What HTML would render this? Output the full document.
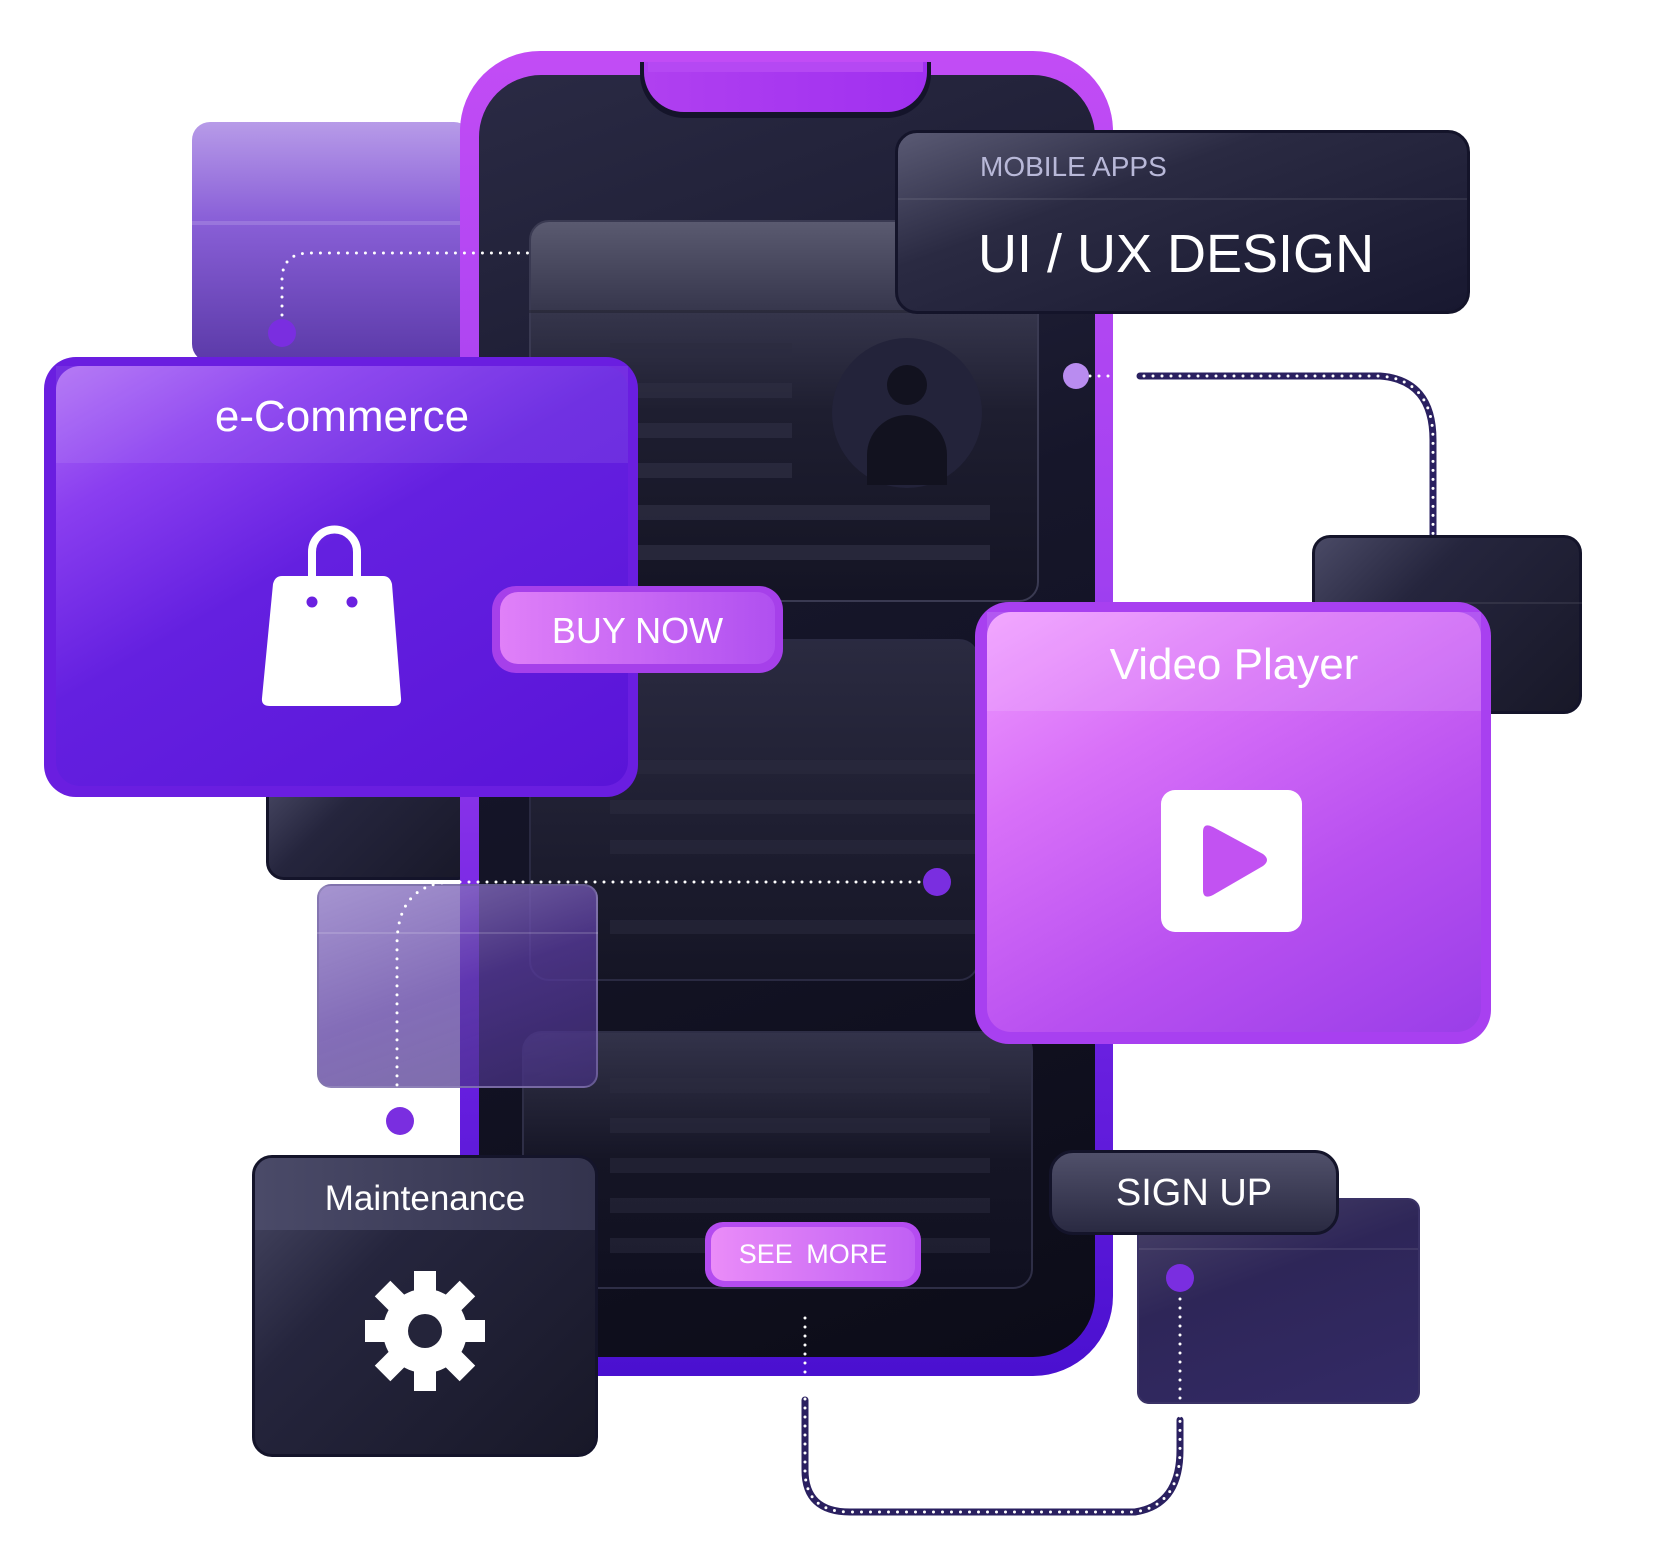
<!DOCTYPE html>
<html><head><meta charset="utf-8"><style>
*{margin:0;padding:0;box-sizing:border-box}
body{width:1662px;height:1549px;background:#fff;position:relative;overflow:hidden;font-family:"Liberation Sans",sans-serif}
.a{position:absolute}
.dark{background:linear-gradient(135deg,#4a4a66 0%,#25253d 35%,#181828 100%);border:3px solid #14142a;border-radius:18px;overflow:hidden}
.band{position:absolute;left:0;right:0;top:0}
.t{position:absolute;color:#fff;white-space:nowrap}
.line{position:absolute;background:#2c2c40;opacity:.8}
</style></head><body>

<div class="a" style="left:192px;top:122px;width:280px;height:240px;border-radius:18px;background:linear-gradient(180deg,#b79be8 0%,#8a60d8 40%,#5b3aa8 100%)"></div>
<div class="a" style="left:192px;top:221px;width:280px;height:4px;background:rgba(255,255,255,.15)"></div>
<div class="a dark" style="left:266px;top:770px;width:210px;height:110px"></div>

<div class="a" style="left:460px;top:51px;width:653px;height:1325px;border-radius:80px;background:linear-gradient(180deg,#c24cf5 0%,#a040f0 40%,#6a20e0 75%,#4a10d0 100%)"></div>
<div class="a" style="left:479px;top:75px;width:616px;height:1282px;border-radius:62px;background:linear-gradient(160deg,#2a2a44 0%,#16162a 40%,#0c0c18 100%)"></div>
<div class="a" style="left:640px;top:62px;width:291px;height:56px;border-radius:0 0 44px 44px;background:#14142a"></div>
<div class="a" style="left:644px;top:62px;width:283px;height:50px;border-radius:0 0 40px 40px;background:linear-gradient(90deg,#b040f0,#a030f0)"></div>
<div class="a" style="left:648px;top:62px;width:275px;height:10px;background:#b548f3"></div>

<div class="a" style="left:529px;top:220px;width:510px;height:382px;border-radius:20px;background:linear-gradient(180deg,#5a5a70 0%,#34344a 25%,#1e1e30 50%,#141424 100%);border:2px solid #3a3a52"></div>
<div class="a" style="left:529px;top:310px;width:510px;height:3px;background:rgba(0,0,0,.2)"></div>
<div class="a" style="left:832px;top:338px;width:150px;height:150px;border-radius:50%;background:#23233a"></div>
<div class="a" style="left:887px;top:365px;width:40px;height:40px;border-radius:50%;background:#12121f"></div>
<div class="a" style="left:867px;top:415px;width:80px;height:70px;border-radius:40px 40px 0 0;background:#12121f"></div>
<div class="line" style="left:610px;top:343px;width:182px;height:15px"></div>
<div class="line" style="left:610px;top:383px;width:182px;height:15px"></div>
<div class="line" style="left:610px;top:423px;width:182px;height:15px"></div>
<div class="line" style="left:610px;top:463px;width:182px;height:15px"></div>
<div class="line" style="left:610px;top:505px;width:380px;height:15px"></div>
<div class="line" style="left:610px;top:545px;width:380px;height:15px"></div>

<div class="a" style="left:529px;top:639px;width:450px;height:342px;border-radius:20px;background:linear-gradient(180deg,#2a2a40,#151525);border:2px solid #2a2a42"></div>
<div class="line" style="left:610px;top:760px;width:370px;height:14px;opacity:.5"></div>
<div class="line" style="left:610px;top:800px;width:370px;height:14px;opacity:.5"></div>
<div class="line" style="left:610px;top:840px;width:370px;height:14px;opacity:.5"></div>
<div class="line" style="left:610px;top:920px;width:370px;height:14px;opacity:.5"></div>

<div class="a" style="left:522px;top:1031px;width:511px;height:258px;border-radius:20px;background:linear-gradient(180deg,#33334a,#151525 50%,#101020);border:2px solid #2e2e46"></div>
<div class="line" style="left:610px;top:1078px;width:380px;height:15px;opacity:.5"></div>
<div class="line" style="left:610px;top:1118px;width:380px;height:15px;opacity:.5"></div>
<div class="line" style="left:610px;top:1158px;width:380px;height:15px;opacity:.5"></div>
<div class="line" style="left:610px;top:1198px;width:380px;height:15px;opacity:.5"></div>
<div class="line" style="left:610px;top:1238px;width:380px;height:15px;opacity:.5"></div>

<div class="a" style="left:317px;top:884px;width:281px;height:204px;border-radius:14px;background:linear-gradient(160deg,rgba(150,130,200,.85) 0%,rgba(90,60,160,.75) 50%,rgba(70,50,130,.7) 100%);border:2px solid rgba(130,120,170,.6)"></div>
<div class="a" style="left:317px;top:932px;width:281px;height:2px;background:rgba(255,255,255,.15)"></div>

<svg class="a" style="left:0;top:0" width="1662" height="1549">
<g fill="none" stroke-linecap="round">
<path d="M1140 376 H1380 Q1433 380 1433 440 V540" stroke="#2a2060" stroke-width="7"/>
<path d="M1090 376 H1380 Q1433 380 1433 440 V600" stroke="#fff" stroke-width="3" stroke-dasharray="0 9"/>
<path d="M805 1400 V1470 Q805 1512 850 1512 H1135 Q1180 1505 1180 1450 V1420" stroke="#2a2060" stroke-width="7"/>
<path d="M805 1318 V1470 Q805 1512 850 1512 H1135 Q1180 1505 1180 1450 V1420" stroke="#fff" stroke-width="3" stroke-dasharray="0 9"/>
<path d="M282 333 V280 Q282 253 310 253 H530" stroke="#fff" stroke-width="3" stroke-dasharray="0 9"/>
<path d="M937 882 H450 Q397 885 397 945 V1121" stroke="#fff" stroke-width="3" stroke-dasharray="0 9"/>
</g>
<circle cx="282" cy="333" r="14" fill="#7a2ee0"/>
<circle cx="400" cy="1121" r="14" fill="#7a2ee0"/>
<circle cx="937" cy="882" r="14" fill="#7a2ee0"/>
<circle cx="1076" cy="376" r="13" fill="#b98cf0"/>
</svg>

<div class="a dark" style="left:895px;top:130px;width:575px;height:184px;border-radius:22px;background:linear-gradient(160deg,#5a5a74 0%,#2a2a42 35%,#181830 100%)">
<div class="band" style="top:65px;height:2px;background:rgba(255,255,255,.08)"></div>
<div class="t" style="left:82px;top:18px;font-size:28px;color:#b8b8d8">MOBILE APPS</div>
<div class="t" style="left:80px;top:90px;font-size:54px">UI / UX DESIGN</div>
</div>

<div class="a dark" style="left:1312px;top:535px;width:270px;height:179px"></div>
<div class="a" style="left:1312px;top:602px;width:270px;height:2px;background:rgba(255,255,255,.08)"></div>

<div class="a" style="left:44px;top:357px;width:594px;height:440px;border-radius:32px;background:#6a1ee0"></div>
<div class="a" style="left:56px;top:366px;width:572px;height:420px;border-radius:24px;background:linear-gradient(150deg,#b070f5 0%,#8a3ef0 20%,#6420e0 45%,#5a14d8 100%)">
<div class="band" style="height:97px;background:rgba(255,255,255,.08)"></div>
<div class="t" style="left:0;right:0;text-align:center;top:26px;font-size:44px">e-Commerce</div>
</div>
<svg class="a" style="left:255px;top:520px" width="160" height="195">
<path d="M57 58 V32 A22.5 22.5 0 0 1 102 32 V58" fill="none" stroke="#fff" stroke-width="8"/>
<path d="M32 56 H128 Q135 56 137 64 L146 178 Q147 186 138 186 H15 Q6 186 7 178 L18 64 Q20 56 27 56 Z" fill="#fff"/>
<circle cx="57" cy="82" r="5.5" fill="#6a20e0"/>
<circle cx="97" cy="82" r="5.5" fill="#6a20e0"/>
</svg>

<div class="a" style="left:492px;top:586px;width:291px;height:87px;border-radius:24px;background:#a640ea"></div>
<div class="a" style="left:500px;top:592px;width:275px;height:72px;border-radius:18px;background:linear-gradient(90deg,#e080f8,#b050f0)"></div>
<div class="t" style="left:492px;width:291px;text-align:center;top:610px;font-size:36px">BUY NOW</div>

<div class="a" style="left:975px;top:602px;width:516px;height:442px;border-radius:34px;background:#a840f0"></div>
<div class="a" style="left:987px;top:612px;width:494px;height:420px;border-radius:24px;background:linear-gradient(150deg,#f09cff 0%,#d870f8 30%,#b850f0 65%,#9a3ee8 100%)">
<div class="band" style="height:99px;background:rgba(255,255,255,.12)"></div>
<div class="t" style="left:0;right:0;text-align:center;top:28px;font-size:44px">Video Player</div>
</div>
<div class="a" style="left:1161px;top:790px;width:141px;height:142px;border-radius:14px;background:#fff"></div>
<svg class="a" style="left:1195px;top:822px" width="80" height="80"><path d="M8 10 Q8 0 18 5 L68 32 Q76 38 68 44 L18 73 Q8 78 8 68 Z" fill="#c252f2"/></svg>

<div class="a dark" style="left:252px;top:1155px;width:346px;height:302px;border-radius:20px">
<div class="band" style="height:72px;background:linear-gradient(90deg,#4a4a68,#33334d)"></div>
<div class="t" style="left:0;right:0;text-align:center;top:21px;font-size:35px">Maintenance</div>
</div>
<svg class="a" style="left:365px;top:1271px" width="120" height="120" viewBox="-60 -60 120 120">
<g fill="#fff">
<circle r="42"/>
<g id="tooth"><rect x="-11" y="-60" width="22" height="26"/></g>
<use href="#tooth" transform="rotate(45)"/><use href="#tooth" transform="rotate(90)"/><use href="#tooth" transform="rotate(135)"/>
<use href="#tooth" transform="rotate(180)"/><use href="#tooth" transform="rotate(225)"/><use href="#tooth" transform="rotate(270)"/><use href="#tooth" transform="rotate(315)"/>
</g>
<circle r="17" fill="#24243a"/>
</svg>

<div class="a" style="left:705px;top:1222px;width:216px;height:65px;border-radius:18px;background:#b44cf0"></div>
<div class="a" style="left:711px;top:1227px;width:204px;height:54px;border-radius:14px;background:linear-gradient(90deg,#ea8cf8,#c060f4)"></div>
<div class="t" style="left:705px;width:216px;text-align:center;top:1239px;font-size:27px;word-spacing:6px">SEE MORE</div>

<div class="a" style="left:1137px;top:1198px;width:283px;height:206px;border-radius:12px;background:linear-gradient(160deg,#4a4468 0%,#2e2658 40%,#332a66 100%);border:2px solid #3a3266"></div>
<div class="a" style="left:1139px;top:1248px;width:279px;height:2px;background:rgba(255,255,255,.08)"></div>

<div class="a dark" style="left:1049px;top:1150px;width:290px;height:85px;border-radius:24px;background:linear-gradient(180deg,#50506a,#2a2a42)"></div>
<div class="t" style="left:1049px;width:290px;text-align:center;top:1172px;font-size:38px">SIGN UP</div>

<svg class="a" style="left:0;top:0" width="1662" height="1549">
<path d="M1180 1290 V1420" fill="none" stroke="#fff" stroke-width="3" stroke-linecap="round" stroke-dasharray="0 9"/>
<circle cx="1180" cy="1278" r="14" fill="#7a2ee0"/>
</svg>

</body></html>
